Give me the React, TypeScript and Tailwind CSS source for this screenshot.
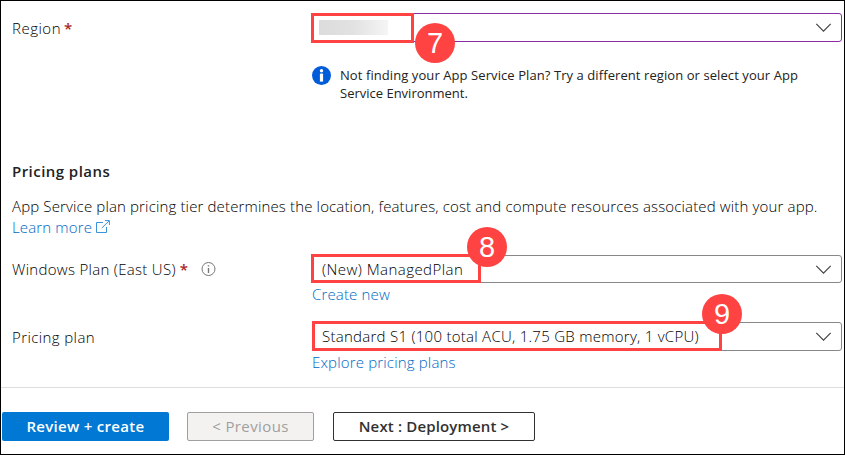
import type { ReactNode } from "react";

function Chevron() {
  return (
    <svg className="mr-[9px] shrink-0" width="17" height="11" viewBox="0 0 17 11" fill="none">
      <path d="M1.3 1.8 8.5 9.1 15.7 1.8" stroke="#444" strokeWidth="1.2" />
    </svg>
  );
}

function Badge({ n, place }: { n: number; place: string }) {
  return (
    <span
      className={`absolute z-10 flex size-10 items-center justify-center rounded-full bg-[#ff4343] font-['Liberation_Sans',sans-serif] text-[29px] font-normal leading-none text-white ${place}`}
    >
      {n}
    </span>
  );
}

function Select({ border, children }: { border: string; children?: ReactNode }) {
  return (
    <div className={`relative ml-[311px] flex w-[530px] items-center justify-between rounded-[3px] border ${border}`}>
      {children}
      <Chevron />
    </div>
  );
}

function Label({ children }: { children: ReactNode }) {
  return <div className="absolute left-[11px] top-1/2 flex -translate-y-1/2 items-center whitespace-nowrap">{children}</div>;
}

export default function App() {
  return (
    <div className="flex h-[455px] w-[845px] flex-col overflow-hidden border border-black bg-white font-['Open_Sans','Noto_Sans',sans-serif] text-[15px] font-light leading-[21px] text-black">
      <div className="relative mt-3">
        <Label>
          <span className="tracking-[0.5px]">Region</span>
          <span className="ml-[3px] font-semibold text-[#a4262c]">*</span>
        </Label>
        <Select border="h-[29px] border-[#8a2da5]">
          <span className="ml-[6px] h-[15px] w-[69px] bg-linear-to-r from-[#dcdcdc] via-[#e2e2e2] to-[#f5f5f5]" />
          <span className="absolute -left-[2px] -top-px h-[30px] w-[103px] border-[3px] border-[#ff4343]" />
          <Badge n={7} place="left-[102px] top-[9px]" />
        </Select>
      </div>

      <div className="ml-[311px] mt-[24px] flex h-9 text-[13px] leading-[18px]">
        <svg className="shrink-0" width="19" height="19" viewBox="0 0 19 19">
          <circle cx="9.5" cy="9.5" r="9.5" fill="#015cda" />
          <circle cx="9.5" cy="4.7" r="1.7" fill="#fff" />
          <path d="M7.9 7.6h3.2v8H7.9z" fill="#fff" />
        </svg>
        <p className="ml-[9px] whitespace-nowrap font-normal text-[#222]">
          <span className="block tracking-[0.08px]">Not finding your App Service Plan? Try a different region or select your App</span>
          <span className="block">Service Environment.</span>
        </p>
      </div>

      <h2 className="ml-[11px] mt-[59px] h-[21px] text-[15px] font-semibold tracking-[0.45px] text-[#222]">Pricing plans</h2>
      <div className="ml-[11px] mt-[14px] h-[42px] whitespace-nowrap">
        <p className="tracking-[0.145px]">
          App Service plan pricing tier determines the location, features, cost and compute resources associated with your app.
        </p>
        <a className="flex items-center text-[#0068c4]">
          <span className="tracking-[0.15px]">Learn more</span>
          <svg className="mb-[3px] ml-1" width="14" height="13" viewBox="0 0 14 13" fill="none" stroke="#3a94db">
            <path d="M7 2.5H.5v10h10V7M9 .6h4.4V5M13.2.8 5.8 8" />
          </svg>
        </a>
      </div>

      <div className="relative mt-[17px]">
        <Label>
          <span className="tracking-[0.3px]">Windows Plan (East US)</span>
          <span className="ml-1 font-semibold text-[#a4262c]">*</span>
          <svg className="ml-[13px]" width="15" height="15" viewBox="0 0 15 15" fill="none" stroke="#777">
            <circle cx="7.5" cy="7.5" r="6.5" />
            <path d="M7.5 6.5v5M7.5 3.7v1.4" strokeWidth="1.4" />
          </svg>
        </Label>
        <Select border="h-[28px] border-[#8a8886]">
          <span className="ml-[9px] whitespace-nowrap tracking-[0.45px]">(New) ManagedPlan</span>
          <span className="absolute -left-[2px] -top-[2px] h-[29px] w-[170px] border-[3px] border-[#ff4343]" />
          <Badge n={8} place="left-[154px] -top-[29px]" />
        </Select>
      </div>
      <a className="ml-[311px] mt-[1px] h-[21px] tracking-[0.15px] text-[#0068c4]">Create new</a>

      <div className="relative mt-[17px]">
        <Label>
          <span className="tracking-[0.4px]">Pricing plan</span>
        </Label>
        <Select border="h-[29px] border-[#8a8886]">
          <span className="ml-[9px] whitespace-nowrap tracking-[0.27px]">Standard S1 (100 total ACU, 1.75 GB memory, 1 vCPU)</span>
          <span className="absolute -left-px -top-[2px] h-[30px] w-[410px] border-[3px] border-[#ff4343]" />
          <Badge n={9} place="left-[389px] -top-[29px]" />
        </Select>
      </div>
      <a className="ml-[311px] mt-[1px] h-[21px] tracking-[0.17px] text-[#0068c4]">Explore pricing plans</a>

      <div className="mt-[14px] h-px shrink-0 bg-[#dddddd]" />
      <div className="ml-px mt-[24px] flex h-[29px] whitespace-nowrap font-semibold leading-[20px]">
        <button className="w-[167px] rounded-[2px] bg-[#0078d4] pb-[2px] tracking-[0.3px] text-white">Review + create</button>
        <button className="ml-[18px] w-[127px] rounded-[2px] border border-[#a19f9d] bg-[#f3f2f1] pb-[2px] font-medium tracking-[0.4px] text-[#a19f9d]">
          &lt; Previous
        </button>
        <button className="ml-[19px] w-[202px] rounded-[2px] border border-[#323130] pb-[2px] tracking-[0.15px] text-[#323130]">
          Next : Deployment &gt;
        </button>
      </div>
    </div>
  );
}
